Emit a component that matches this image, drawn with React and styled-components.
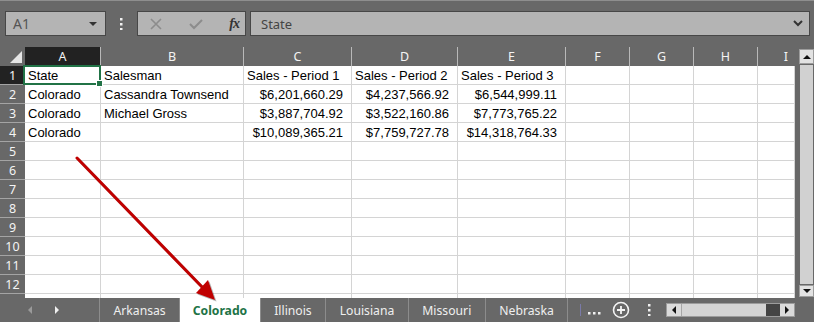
import React from 'react';
import styled, { createGlobalStyle } from 'styled-components';

const GlobalStyle = createGlobalStyle`
  html, body { margin: 0; padding: 0; background: #686868; }
`;

const GREEN = '#217346';
const DARK = '#686868';

const Root = styled.div`
  position: relative;
  width: 814px;
  height: 322px;
  box-sizing: border-box;
  border-top: 1px solid #8e8e8e;
  background: ${DARK};
  display: flex;
  flex-direction: column;
  overflow: hidden;
  font-family: 'Segoe UI', 'Noto Sans', sans-serif;
`;

// Formula toolbar
const Toolbar = styled.div`
  height: 46px;
  box-sizing: border-box;
  padding: 10px 4px 0 5px;
  display: flex;
  align-items: flex-start;
`;

const Box = styled.div`
  height: 25px;
  box-sizing: border-box;
  border: 1px solid #474747;
  background: #b4b4b4;
  display: flex;
  align-items: center;
`;

const NameBox = styled(Box)`
  width: 101px;
  padding: 0 8px 0 7px;
  justify-content: space-between;
  font-size: 14px;
  color: #555;
`;

const Grip = styled.div`
  width: 31px;
  height: 25px;
  display: flex;
  align-items: center;
  justify-content: center;
`;

const FormulaButtons = styled(Box)`
  width: 109px;
  padding: 0 6px 0 12px;
  justify-content: space-between;
  color: #8a8a8a;
`;

const FxText = styled.span`
  font-family: 'Liberation Serif', serif;
  font-style: italic;
  font-weight: bold;
  font-size: 14px;
  color: #333;
  letter-spacing: -1px;
`;

const FormulaBar = styled(Box)`
  flex: 1;
  margin-left: 4px;
  padding: 0 6px 0 10px;
  justify-content: space-between;
  font-size: 13px;
  color: #444;
`;

// Sheet area
const SheetArea = styled.div`
  height: 251px;
  display: flex;
`;

const Grid = styled.div`
  width: 795px;
  height: 251px;
  display: grid;
  grid-template-columns: 25px 76px 143px 108px 106px 108px 64px 64px 64px 37px;
  grid-auto-rows: 19px;
  overflow: hidden;
  background: #fff;
`;

const Corner = styled.div`
  background: ${DARK};
  display: flex;
  align-items: flex-end;
  justify-content: flex-end;
  padding: 0 3px 3px 0;
`;

const ColHead = styled.div`
  background: ${(p) => (p.$active ? '#222' : DARK)};
  border-right: 1px solid ${(p) => (p.$last ? DARK : '#b9b9b9')};
  color: #f4f4f4;
  font-size: 12.5px;
  display: flex;
  align-items: center;
  justify-content: ${(p) => (p.$last ? 'flex-end' : 'center')};
  padding-right: ${(p) => (p.$last ? '6px' : '0')};
`;

const RowHead = styled.div`
  background: ${(p) => (p.$active ? '#222' : DARK)};
  border-bottom: 1px solid #a4a4a4;
  color: #f4f4f4;
  font-size: 12.5px;
  display: flex;
  align-items: center;
  justify-content: center;
`;

const Cell = styled.div`
  position: relative;
  border-right: 1px solid #d4d4d4;
  border-bottom: 1px solid #d4d4d4;
  padding: ${(p) => (p.$right ? '0 8px 0 2px' : '0 2px 0 3px')};
  text-align: ${(p) => (p.$right ? 'right' : 'left')};
  font-family: 'Liberation Sans', Arial, sans-serif;
  font-size: 13px;
  line-height: 19px;
  color: #000;
  white-space: nowrap;
  overflow: ${(p) => (p.$spill ? 'visible' : 'hidden')};
  z-index: ${(p) => (p.$spill ? 1 : 0)};
`;

const Selection = styled.div`
  position: absolute;
  left: -2px;
  top: -1px;
  right: -1px;
  bottom: -1px;
  border: 2px solid ${GREEN};
  pointer-events: none;
  &::after {
    content: '';
    position: absolute;
    right: -4px;
    bottom: -4px;
    width: 5px;
    height: 5px;
    background: ${GREEN};
    border: 1px solid #fff;
  }
`;

const VScroll = styled.div`
  width: 15px;
  margin-left: 4px;
  display: flex;
  flex-direction: column;
  padding: 2px 0 1px;
  box-sizing: border-box;
`;

const ScrollBtn = styled.div`
  height: ${(p) => p.$h || 14}px;
  box-sizing: border-box;
  background: #e2e2e2;
  border: 1px solid #9c9c9c;
  display: flex;
  align-items: center;
  justify-content: center;
`;

const VTrack = styled.div`
  flex: 1;
  background: #d1d1d1;
  margin: 1px 1px;
`;

// Tabs
const TabBar = styled.div`
  flex: 1;
  display: flex;
  align-items: stretch;
  font-size: 12.2px;
  color: #efefef;
`;

const TabNav = styled.div`
  width: 100px;
  border-right: 1px solid #8c8c8c;
  display: flex;
  align-items: center;
  padding-left: 28px;
  gap: 23px;
  box-sizing: border-box;
`;

const Tab = styled.div`
  padding: 0 ${(p) => (p.$active ? 12.5 : 13.5)}px;
  border-right: 1px solid #8c8c8c;
  display: flex;
  align-items: center;
  background: ${(p) => (p.$active ? '#fff' : 'transparent')};
  color: ${(p) => (p.$active ? GREEN : '#efefef')};
  font-weight: ${(p) => (p.$active ? 700 : 400)};
`;

const Spacer = styled.div`
  flex: 1;
  display: flex;
  align-items: center;
  justify-content: flex-end;
  padding-right: 2px;
`;

const SplitMark = styled.div`
  width: 1px;
  height: 12px;
  background: #7a7aa8;
`;

const Tool = styled.div`
  width: ${(p) => p.$w}px;
  display: flex;
  align-items: center;
  justify-content: center;
  padding-top: ${(p) => p.$drop || 0}px;
`;

const HScroll = styled.div`
  width: 129px;
  height: 14px;
  align-self: center;
  margin: 0 19px 0 3px;
  display: flex;
  background: #d4d4d4;
  border: 1px solid #9c9c9c;
  box-sizing: border-box;
`;

const HBtn = styled.div`
  width: 14px;
  display: flex;
  align-items: center;
  justify-content: center;
  background: #dadada;
  border-right: ${(p) => (p.$left ? '1px solid #a6a6a6' : 'none')};
`;

const HTrack = styled.div`
  flex: 1;
  background: #d4d4d4;
`;

const HThumb = styled.div`
  width: 14px;
  background: #444;
`;

const Overlay = styled.svg`
  position: absolute;
  left: 0;
  top: 0;
  pointer-events: none;
  z-index: 5;
`;

const columns = ['A', 'B', 'C', 'D', 'E', 'F', 'G', 'H', 'I'];

const rows = [
  ['State', 'Salesman', 'Sales - Period 1', 'Sales - Period 2', 'Sales - Period 3'],
  ['Colorado', 'Cassandra Townsend', '$6,201,660.29', '$4,237,566.92', '$6,544,999.11'],
  ['Colorado', 'Michael Gross', '$3,887,704.92', '$3,522,160.86', '$7,773,765.22'],
  ['Colorado', '', '$10,089,365.21', '$7,759,727.78', '$14,318,764.33'],
];

const tabs = ['Arkansas', 'Colorado', 'Illinois', 'Louisiana', 'Missouri', 'Nebraska'];

const Tri = ({ dir, color = '#111', size = 4 }) => {
  const s = size;
  const pts = {
    up: `0,${s} ${s},0 ${2 * s},${s}`,
    down: `0,0 ${2 * s},0 ${s},${s}`,
    left: `${s},0 ${s},${2 * s} 0,${s}`,
    right: `0,0 0,${2 * s} ${s},${s}`,
  }[dir];
  const w = dir === 'up' || dir === 'down' ? 2 * s : s;
  const h = dir === 'up' || dir === 'down' ? s : 2 * s;
  return (
    <svg width={w} height={h}>
      <polygon points={pts} fill={color} />
    </svg>
  );
};

const VDots = ({ color = '#f0f0f0' }) => (
  <svg width="3" height="12">
    <rect x="0" y="0" width="2.5" height="2.5" fill={color} />
    <rect x="0" y="5" width="2.5" height="2.5" fill={color} />
    <rect x="0" y="10" width="2.5" height="2.5" fill={color} />
  </svg>
);

export default function App() {
  const totalRows = 13;
  return (
    <Root>
      <GlobalStyle />
      <Toolbar>
        <NameBox>
          <span>A1</span>
          <Tri dir="down" color="#333" size={4} />
        </NameBox>
        <Grip>
          <VDots />
        </Grip>
        <FormulaButtons>
          <svg width="12" height="12">
            <path d="M1 1 L11 11 M11 1 L1 11" stroke="#8c8c8c" strokeWidth="1.6" />
          </svg>
          <svg width="14" height="12">
            <path d="M1 6 L5 10 L13 2" stroke="#8c8c8c" strokeWidth="2" fill="none" />
          </svg>
          <FxText>fx</FxText>
        </FormulaButtons>
        <FormulaBar>
          <span>State</span>
          <svg width="10" height="7">
            <path d="M1 1 L5 5 L9 1" stroke="#333" strokeWidth="2" fill="none" />
          </svg>
        </FormulaBar>
      </Toolbar>

      <SheetArea>
        <Grid>
          <Corner>
            <svg width="12" height="12">
              <polygon points="12,0 12,12 0,12" fill="#e6e6e6" />
            </svg>
          </Corner>
          {columns.map((c, i) => (
            <ColHead key={c} $active={i === 0} $last={i === columns.length - 1}>
              {c}
            </ColHead>
          ))}
          {Array.from({ length: totalRows }).map((_, r) => (
            <React.Fragment key={r}>
              <RowHead $active={r === 0}>{r + 1}</RowHead>
              {columns.map((c, ci) => {
                const val = rows[r] ? rows[r][ci] || '' : '';
                const numeric = val.startsWith('$');
                return (
                  <Cell key={c} $right={numeric} $spill={r === 0 && ci === 0}>
                    {val}
                    {r === 0 && ci === 0 && <Selection />}
                  </Cell>
                );
              })}
            </React.Fragment>
          ))}
        </Grid>
        <VScroll>
          <ScrollBtn $h={15}>
            <Tri dir="up" size={4} />
          </ScrollBtn>
          <VTrack />
          <ScrollBtn $h={12}>
            <Tri dir="down" size={4} />
          </ScrollBtn>
        </VScroll>
      </SheetArea>

      <TabBar>
        <TabNav>
          <Tri dir="left" color="#9a9a9a" size={4} />
          <Tri dir="right" color="#f0f0f0" size={4} />
        </TabNav>
        {tabs.map((t) => (
          <Tab key={t} $active={t === 'Colorado'}>
            {t}
          </Tab>
        ))}
        <Spacer>
          <SplitMark />
        </Spacer>
        <Tool $w={24} $drop={5}>
          <svg width="14" height="4">
            <rect x="0" y="1" width="2.5" height="2.5" fill="#f0f0f0" />
            <rect x="5" y="1" width="2.5" height="2.5" fill="#f0f0f0" />
            <rect x="10" y="1" width="2.5" height="2.5" fill="#f0f0f0" />
          </svg>
        </Tool>
        <Tool $w={28}>
          <svg width="18" height="18">
            <circle cx="9" cy="9" r="7.5" stroke="#f4f4f4" strokeWidth="1.6" fill="none" />
            <path d="M9 5 V13 M5 9 H13" stroke="#f4f4f4" strokeWidth="1.8" />
          </svg>
        </Tool>
        <Tool $w={28}>
          <VDots />
        </Tool>
        <HScroll>
          <HBtn $left>
            <Tri dir="left" size={4} />
          </HBtn>
          <HTrack />
          <HThumb />
          <HBtn>
            <Tri dir="right" size={4} />
          </HBtn>
        </HScroll>
      </TabBar>

      <Overlay width="814" height="322" viewBox="0 0 814 322">
        <g opacity="0.35" transform="translate(1.5,1.5)">
          <line x1="77" y1="157" x2="204" y2="288" stroke="#333" strokeWidth="3" />
          <polygon points="215,299 196,292 208,279" fill="#333" />
        </g>
        <line x1="77" y1="157" x2="204" y2="288" stroke="#c00000" strokeWidth="3" strokeLinecap="round" />
        <polygon points="215,299 196,292 208,279" fill="#c00000" />
      </Overlay>
    </Root>
  );
}
